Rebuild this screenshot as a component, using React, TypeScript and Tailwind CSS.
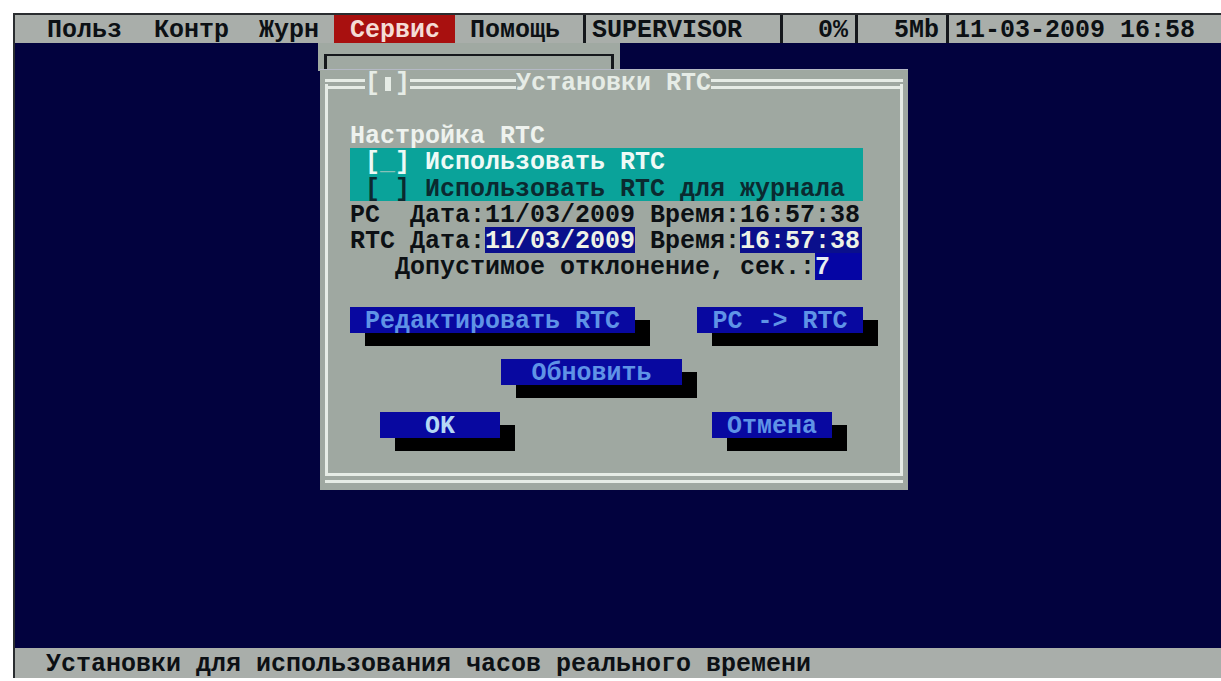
const cell = "h-[26.25px] leading-[30px] whitespace-pre";
const field = "inline-block h-[26.25px] align-top";

function MenuStat({ className, children }: { className: string; children: React.ReactNode }) {
  return <div className={`border-l-[3px] border-[#15181c] ${className}`}>{children}</div>;
}

function DoubleLine({ className }: { className: string }) {
  return <div className={`h-[10px] border-y-[3px] border-[#e6ece6] ${className}`} />;
}

function DosButton({ label, className }: { label: string; className: string }) {
  return (
    <button
      className={`block h-[26.25px] whitespace-pre bg-[#0808a0] pt-[3px] text-center font-bold leading-[23.25px] text-[#5f93e6] shadow-[15px_13px_0_0_#000] ${className}`}
    >
      {label}
    </button>
  );
}

export default function App() {
  return (
    <div className="flex h-[681px] w-[1221px] flex-col overflow-hidden bg-white pt-[13px] pb-[3px] pl-[13px] font-['Liberation_Mono',monospace] text-[25px] font-bold text-[#0c1014]">
      <div className="flex min-h-0 flex-1 flex-col border-t-2 border-l-2 border-[#2a2d30]">
        {/* top menu and status line */}
        <div className="flex h-[28px] shrink-0 bg-[#a9aeaa] pl-[32px] leading-[32px]">
          <div className="w-[107px] whitespace-pre">Польз</div>
          <div className="w-[105px] whitespace-pre">Контр</div>
          <div className="w-[75px] whitespace-pre">Журн</div>
          <div className="w-[121px] bg-[#a8100f] pl-[16px] text-[#f4dcd6]">Сервис</div>
          <div className="w-[128px] pl-[15px]">Помощь</div>
          <MenuStat className="w-[197px] pl-[6px]">SUPERVISOR</MenuStat>
          <MenuStat className="w-[75px] pr-[7px] text-right">0%</MenuStat>
          <MenuStat className="w-[91px] pr-[7px] text-right">5Mb</MenuStat>
          <MenuStat className="flex-1 pl-[6px] whitespace-pre">11-03-2009 16:58</MenuStat>
        </div>

        {/* desktop */}
        <div className="relative min-h-0 flex-1 bg-[#02023e]">
          {/* open Сервис dropdown behind the dialog */}
          <div className="absolute top-0 left-[303px] h-[28px] w-[302px] bg-[#a0a9a2] px-[6px] pt-[11px]">
            <div className="h-[17px] border-x-[3px] border-t-2 border-[#15181c]" />
          </div>

          {/* RTC settings dialog */}
          <div className="absolute top-[27px] left-[305px] h-[420px] w-[588px] bg-[#9fa8a1] px-[5px] pt-[1px] shadow-[0_-1px_0_0_#b4b8c4]">
            <div className="relative z-10 flex h-[26px] items-center leading-[26px] text-[#e6ece6]">
              <DoubleLine className="w-[40px]" />
              <div className="flex whitespace-pre">
                <span>[</span>
                <span className="flex w-[15px] items-center justify-center">
                  <span className="h-[14px] w-[6px] bg-[#e6ece6]" />
                </span>
                <span>]</span>
              </div>
              <DoubleLine className="w-[106px]" />
              <div className="whitespace-pre">Установки RTC</div>
              <DoubleLine className="flex-1" />
            </div>

            <div className="-mt-[13px] h-[389px] border-x-[3px] border-[#e6ece6] pt-[38px] pl-[22px]">
              <div className={`${cell} text-[#eef2ee]`}>Настройка RTC</div>
              <div className="w-[513px] bg-[#0aa39a]">
                <div className={`${cell} text-[#eefaf6]`}>
                  {" ["}
                  <span className="text-[#86c0b8]">_</span>
                  {"] Использовать RTC"}
                </div>
                <div className={`${cell} text-[#0b2a30]`}>
                  {" [ ] Использовать RTC для журнала"}
                </div>
              </div>
              <div className={cell}>PC  Дата:11/03/2009 Время:16:57:38</div>
              <div className={cell}>
                RTC Дата:<span className={`${field} bg-[#0a0f8c] text-[#eef2e6]`}>11/03/2009</span> Время:
                <span className={`${field} w-[122px] bg-[#0a0f8c] text-[#eef2e6]`}>16:57:38</span>
              </div>
              <div className={cell}>
                {"   Допустимое отклонение, сек.:"}
                <span className={`${field} w-[47px] bg-[#0505a4] text-[#e8eef2]`}>7</span>
              </div>

              <div className="mt-[27px] flex flex-col gap-[26.25px]">
                <div className="flex">
                  <DosButton label="Редактировать RTC" className="w-[285px]" />
                  <DosButton label="PC -> RTC" className="ml-[62px] w-[166px]" />
                </div>
                <div className="flex">
                  <DosButton label="Обновить" className="ml-[151px] w-[181px]" />
                </div>
                <div className="flex">
                  <DosButton label="OK" className="ml-[30px] w-[120px] !text-[#b4d8f4]" />
                  <DosButton label="Отмена" className="ml-[212px] w-[120px]" />
                </div>
              </div>
            </div>
            <DoubleLine className="" />
          </div>
        </div>

        {/* hint line */}
        <div className="h-[30px] shrink-0 whitespace-pre bg-[#a9aeaa] pl-[31px] leading-[34px]">
          Установки для использования часов реального времени
        </div>
      </div>
    </div>
  );
}
